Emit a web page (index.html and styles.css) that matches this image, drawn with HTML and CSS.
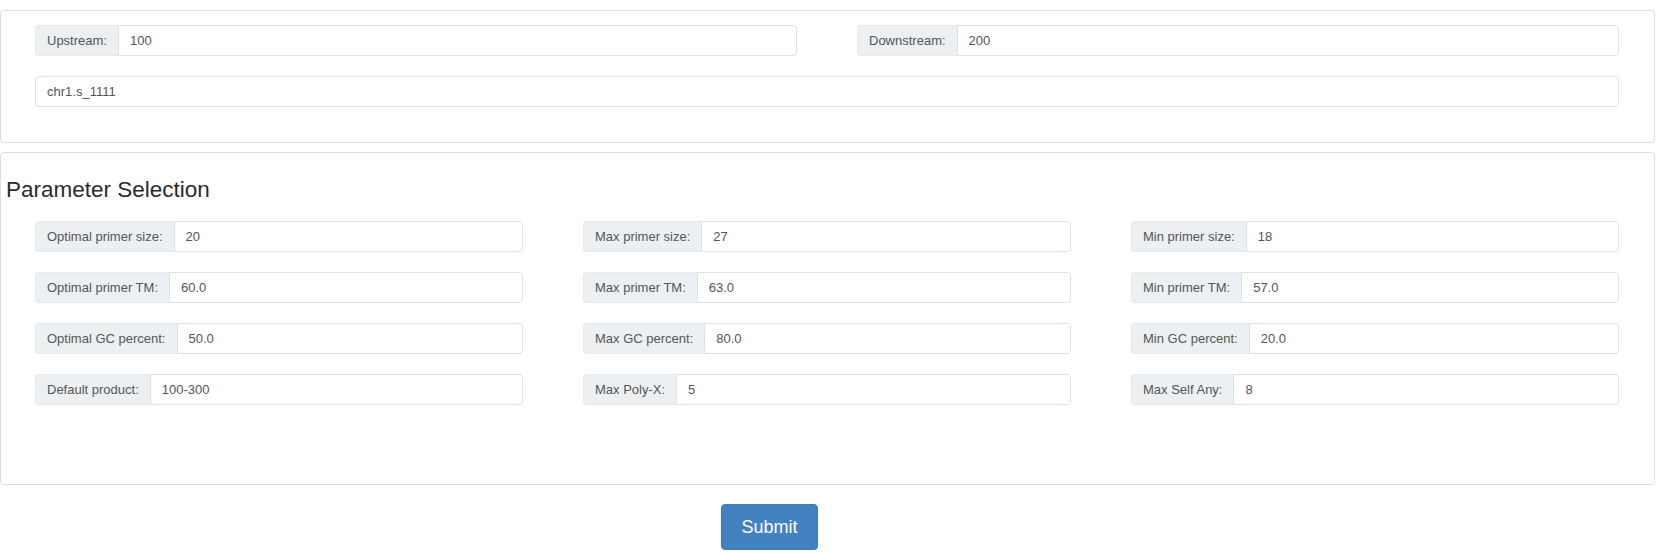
FILE: index.html
```html
<!DOCTYPE html>
<html>
<head>
<meta charset="utf-8">
<link rel="stylesheet" href="styles.css">
</head>
<body>
<div class="page">
  <div class="panel panel-top">
    <div class="grid grid-2">
      <div class="input-group"><span class="addon">Upstream:</span><input class="field" type="text" value="100"></div>
      <div class="input-group"><span class="addon">Downstream:</span><input class="field" type="text" value="200"></div>
    </div>
    <input class="field full" type="text" value="chr1.s_1111">
  </div>

  <div class="panel panel-params">
    <h3 class="title">Parameter Selection</h3>
    <div class="grid grid-3">
      <div class="input-group"><span class="addon">Optimal primer size:</span><input class="field" type="text" value="20"></div>
      <div class="input-group"><span class="addon">Max primer size:</span><input class="field" type="text" value="27"></div>
      <div class="input-group"><span class="addon">Min primer size:</span><input class="field" type="text" value="18"></div>

      <div class="input-group"><span class="addon">Optimal primer TM:</span><input class="field" type="text" value="60.0"></div>
      <div class="input-group"><span class="addon">Max primer TM:</span><input class="field" type="text" value="63.0"></div>
      <div class="input-group"><span class="addon">Min primer TM:</span><input class="field" type="text" value="57.0"></div>

      <div class="input-group"><span class="addon">Optimal GC percent:</span><input class="field" type="text" value="50.0"></div>
      <div class="input-group"><span class="addon">Max GC percent:</span><input class="field" type="text" value="80.0"></div>
      <div class="input-group"><span class="addon">Min GC percent:</span><input class="field" type="text" value="20.0"></div>

      <div class="input-group"><span class="addon">Default product:</span><input class="field" type="text" value="100-300"></div>
      <div class="input-group"><span class="addon">Max Poly-X:</span><input class="field" type="text" value="5"></div>
      <div class="input-group"><span class="addon">Max Self Any:</span><input class="field" type="text" value="8"></div>
    </div>
  </div>

  <div class="actions">
    <button class="btn-submit" type="button">Submit</button>
  </div>
</div>
</body>
</html>
```

FILE: styles.css
```css
* {
  box-sizing: border-box;
}

html, body {
  margin: 0;
  padding: 0;
  background: #ffffff;
}

body {
  font-family: "Liberation Sans", Arial, Helvetica, sans-serif;
  font-size: 13px;
  color: #555555;
}

.page {
  padding-top: 10px;
  width: 1655px;
}

.panel {
  border: 1px solid #dddddd;
  border-radius: 4px;
  background: #ffffff;
}

.panel-top {
  padding: 14px 35px 35px 34px;
  display: flex;
  flex-direction: column;
  gap: 20px;
}

.panel-params {
  margin-top: 9px;
  padding: 0 35px 79px 34px;
}

.title {
  margin: 24px 0 19px -29px;
  font-size: 22.5px;
  line-height: 25px;
  font-weight: normal;
  color: #2b2b2b;
}

.grid {
  display: grid;
  column-gap: 60px;
  row-gap: 20px;
}

.grid-2 {
  grid-template-columns: 1fr 1fr;
}

.grid-3 {
  grid-template-columns: 1fr 1fr 1fr;
}

.input-group {
  display: flex;
  height: 31px;
}

.addon {
  display: flex;
  align-items: center;
  flex: 0 0 auto;
  padding: 0 11px;
  background: #edf0f2;
  border: 1px solid #e6eaed;
  border-right: 0;
  border-radius: 4px 0 0 4px;
  color: #555555;
  font-size: 13px;
  white-space: nowrap;
}

.field {
  display: block;
  height: 31px;
  margin: 0;
  padding: 0 11px;
  border: 1px solid #dae1e8;
  border-radius: 4px;
  background: #ffffff;
  font-family: "Liberation Sans", Arial, Helvetica, sans-serif;
  font-size: 13px;
  color: #555555;
  outline: none;
}

.input-group .field {
  flex: 1 1 auto;
  min-width: 0;
  border-radius: 0 4px 4px 0;
}

.full {
  width: 100%;
}

.actions {
  padding-top: 19px;
  padding-left: 721px;
}

.btn-submit {
  display: block;
  width: 97px;
  height: 46px;
  padding: 0;
  border: 1px solid #3f7dba;
  border-radius: 4px;
  background: #4382c0;
  color: #ffffff;
  font-family: "Liberation Sans", Arial, Helvetica, sans-serif;
  font-size: 18px;
  line-height: 24px;
  cursor: pointer;
}
```
